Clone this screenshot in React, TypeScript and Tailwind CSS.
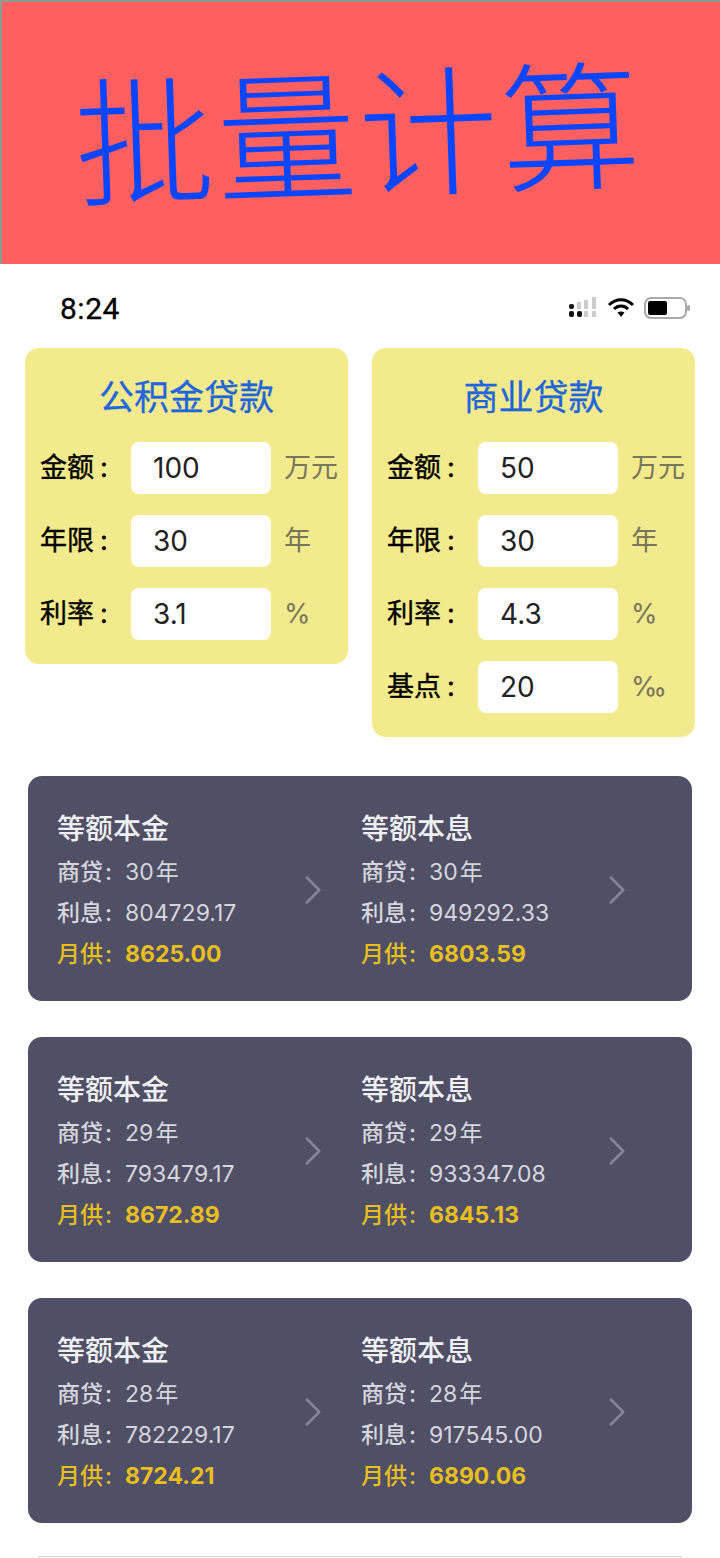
import { ChevronRight } from "lucide-react"

const cjk = "font-['Inter','Noto_Sans_CJK_SC',sans-serif]"

const LoanField = ({ label, value, unit }: { label: string; value: string; unit: string }) => (
    <div className="flex flex-row items-center h-[52px]">
        <div className="w-[91px] shrink-0 text-[27px] text-black whitespace-nowrap [-webkit-text-stroke:0.4px_black]">
            {label}<span className="ml-[6px]">:</span>
        </div>
        <div className="w-[140px] h-[52px] shrink-0 bg-white rounded-lg flex items-center pl-[22px] text-[28px] text-[#222]">{value}</div>
        <div className="ml-[13px] text-[27px] text-[#77775c] whitespace-nowrap">{unit}</div>
    </div>
)

const LoanCard = ({ title, fields }: { title: string; fields: Array<[string, string, string]> }) => (
    <div className="w-[323px] bg-[#f2ea8c] rounded-[14px] pl-[15px] pt-[28px] pb-[24px]">
        <div className="text-center pr-[15px] text-[35px] leading-[42px] text-[#1f66dd] mb-[24px] [-webkit-text-stroke:0.3px_#1f66dd]">{title}</div>
        <div className="flex flex-col gap-[21px]">
            {fields.map((f) => <LoanField key={f[0]} label={f[0]} value={f[1]} unit={f[2]} />)}
        </div>
    </div>
)

const ResultRow = ({ label, value, className }: { label: string; value: string; className: string }) => (
    <div className={`flex flex-row text-[23px] leading-[41px] whitespace-nowrap ${className}`}>
        <span className="w-[68px] shrink-0 font-medium">{label}<span className="ml-[2px]">:</span></span>
        <span>{value}</span>
    </div>
)

const ResultColumn = ({ title, years, interest, monthly }: { title: string; years: string; interest: string; monthly: string }) => (
    <div className="w-[304px] flex flex-row items-center">
        <div className="w-[231px] shrink-0 pt-[8px]">
            <div className="text-[28px] leading-[38px] font-medium text-[#f1f1f4] mb-[4px]">{title}</div>
            <ResultRow label="商贷" value={`${years}\u200a年`} className="text-[#d6d6dc]" />
            <ResultRow label="利息" value={interest} className="text-[#d6d6dc]" />
            <ResultRow label="月供" value={monthly} className="text-[#e8bf1c] font-bold" />
        </div>
        <ChevronRight size={50} strokeWidth={1.2} className="text-[#85859a] shrink-0 mt-[2px]" />
    </div>
)

const ResultCard = ({ years, a, b }: { years: string; a: [string, string]; b: [string, string] }) => (
    <div className="mx-[28px] h-[225px] bg-[#4f4f66] rounded-[14px] pl-[29px] flex flex-row items-center">
        <ResultColumn title="等额本金" years={years} interest={a[0]} monthly={a[1]} />
        <ResultColumn title="等额本息" years={years} interest={b[0]} monthly={b[1]} />
    </div>
)

const StatusIcons = () => (
    <div className="flex flex-row items-center gap-[9px]">
        <svg width="30" height="24" viewBox="0 0 30 24">
            <rect x="1" y="15" width="5" height="6" rx="2" fill="#111" />
            <rect x="1" y="8" width="5" height="5" rx="2" fill="#111" />
            <rect x="9" y="15" width="5" height="6" rx="2" fill="#111" />
            <rect x="9" y="6" width="4" height="7" fill="#ccc" />
            <rect x="16" y="15" width="4" height="6" fill="#ccc" />
            <rect x="16" y="4" width="4" height="9" fill="#ccc" />
            <rect x="24" y="15" width="4" height="6" fill="#ccc" />
            <rect x="24" y="1" width="4" height="12" fill="#ccc" />
        </svg>
        <svg width="28" height="22" viewBox="0 0 28 22" fill="none" stroke="#000" strokeWidth="3">
            <path d="M2 8 C9 1 19 1 26 8" />
            <path d="M7 12 C11 8 17 8 21 12" />
            <path d="M14 20 L10.5 15.5 C12.5 14 15.5 14 17.5 15.5 Z" fill="#000" stroke="none" />
        </svg>
        <svg width="46" height="24" viewBox="0 0 46 24">
            <rect x="1" y="2" width="41" height="20" rx="6" fill="#fff" stroke="#aaa" strokeWidth="2" />
            <rect x="4" y="5" width="19" height="14" rx="2" fill="#000" />
            <rect x="43" y="9" width="3" height="6" rx="1.5" fill="#aaa" />
        </svg>
    </div>
)

export default function App() {
    return (
        <div className={`w-[720px] h-[1558px] bg-white overflow-hidden flex flex-col ${cjk}`}>
            <div className="h-[264px] bg-[#ff5f5f] border-t-2 border-l-2 border-[#8f9a8f] flex items-center justify-center pb-[14px] pr-[6px]">
                <div className="text-[140px] leading-none tracking-[2px] text-[#0a46ff] font-light whitespace-nowrap -rotate-2 font-['Noto_Sans_CJK_SC',sans-serif]">批量计算</div>
            </div>
            <div className="h-[84px] flex flex-row items-center justify-between pl-[60px] pr-[30px] pt-[4px]">
                <div className="text-[30px] tracking-[0.5px] text-black font-['Roboto',sans-serif] [-webkit-text-stroke:0.3px_black]">8:24</div>
                <StatusIcons />
            </div>
            <div className="flex flex-row items-start justify-between pl-[25px] pr-[25px]">
                <LoanCard
                    title="公积金贷款"
                    fields={[["金额", "100", "万元"], ["年限", "30", "年"], ["利率", "3.1", "%"]]}
                />
                <LoanCard
                    title="商业贷款"
                    fields={[["金额", "50", "万元"], ["年限", "30", "年"], ["利率", "4.3", "%"], ["基点", "20", "‰"]]}
                />
            </div>
            <div className="flex flex-col gap-[36px] mt-[39px]">
                <ResultCard years="30" a={["804729.17", "8625.00"]} b={["949292.33", "6803.59"]} />
                <ResultCard years="29" a={["793479.17", "8672.89"]} b={["933347.08", "6845.13"]} />
                <ResultCard years="28" a={["782229.17", "8724.21"]} b={["917545.00", "6890.06"]} />
            </div>
            <div className="mx-[38px] mt-[33px] border-t border-[#d8d8d8]" />
        </div>
    )
}
